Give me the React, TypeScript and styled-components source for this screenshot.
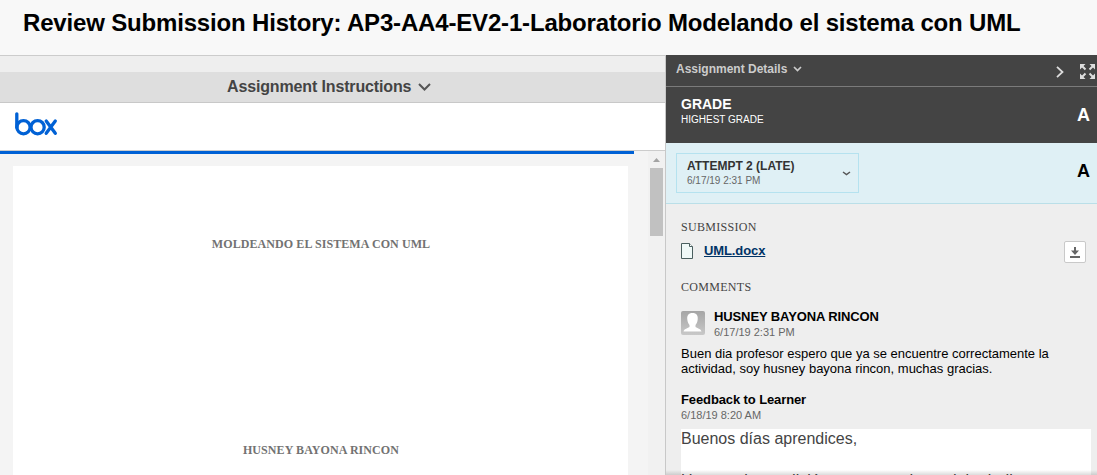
import React from "react";
import styled, { createGlobalStyle } from "styled-components";

const Global = createGlobalStyle`
  *{box-sizing:border-box}
  html,body{margin:0;padding:0;height:475px;overflow:hidden}
  body{background:#eee;font-family:"Liberation Sans",Arial,sans-serif;color:#000}
  svg{display:block;flex:none}
`;
const Page = styled.div`width:1097px;height:475px;display:flex;flex-direction:column;overflow:hidden;`;
const Header = styled.header`height:55px;flex:none;background:#f8f8f8;padding:9px 0 0 23px;`;
const Title = styled.h1`margin:0;font-size:24px;line-height:28px;white-space:nowrap;letter-spacing:-0.17px;`;
const Body = styled.main`flex:1;display:flex;min-height:0;`;
const Viewer = styled.section`width:666px;flex:none;display:flex;flex-direction:column;background:#eee;border-right:1px solid #c8c8c8;border-top:1px solid #ccc;`;
const Instructions = styled.div`margin-top:16px;height:31px;flex:none;background:#dedede;border-bottom:1px solid #c8c8c8;display:flex;align-items:center;padding-left:227px;gap:7px;color:#444;font-size:16px;font-weight:bold;letter-spacing:-0.14px;`;
const BoxBar = styled.div`height:48px;flex:none;background:#fff;border-bottom:1px solid #ccc;padding:9px 0 0 15px;`;
const Preview = styled.div`flex:1;display:flex;min-height:0;background:#f4f4f4;`;
const Scroller = styled.div`flex:1;min-width:0;`;
const Progress = styled.div`height:3px;width:634px;background:#0061d5;`;
const Sheet = styled.article`margin:12px 0 0 13px;width:615px;height:310px;background:#fff;display:flex;flex-direction:column;align-items:center;padding:70px 0 0 1px;gap:190px;`;
const SheetLine = styled.div`font:bold 12px/16px "Liberation Serif",serif;color:#727272;white-space:nowrap;letter-spacing:0.08px;`;
const Scrollbar = styled.div`width:17px;flex:none;background:#f1f1f1;display:flex;flex-direction:column;align-items:center;padding-top:7px;gap:6px;`;
const Thumb = styled.div`width:13px;height:68px;background:#c1c1c1;`;
const Details = styled.aside`flex:1;min-width:0;display:flex;flex-direction:column;background:#eee;`;
const DetailsBar = styled.div`height:32px;flex:none;background:#444;border-bottom:1px solid #7b7b7b;display:flex;padding-left:10px;color:#ccc;font-size:12px;font-weight:bold;line-height:28px;`;
const BarLabel = styled.div`flex:1;display:flex;align-items:center;height:28px;gap:6px;`;
const BarActions = styled.div`display:flex;align-items:center;gap:16px;height:33px;padding-right:2px;`;
const Grade = styled.div`height:56px;flex:none;background:#444;color:#fff;display:flex;justify-content:space-between;padding:9px 7px 0 15px;`;
const GradeName = styled.div`font-size:14px;line-height:16px;font-weight:bold;`;
const GradeType = styled.div`font-size:10px;line-height:16px;`;
const Letter = styled.div`font-size:18px;line-height:38px;font-weight:bold;`;
const Attempt = styled.div`height:61px;flex:none;background:#dff0f5;border-bottom:1px solid #badfe8;display:flex;justify-content:space-between;padding:10px 7px 0 10px;`;
const AttemptLetter = styled(Letter)`line-height:36px;`;
const Picker = styled.button`width:183px;height:40px;background:transparent;border:1px solid #b5e2ef;padding:0 7px 0 10px;display:flex;align-items:center;justify-content:space-between;font-family:inherit;text-align:left;color:#333;`;
const AttemptName = styled.div`font-size:12px;line-height:15px;font-weight:bold;`;
const AttemptDate = styled.div`font-size:10px;line-height:14px;color:#666;`;
const Content = styled.div`flex:1;min-height:0;padding:14px 6px 0 15px;position:relative;overflow:hidden;`;
const Heading = styled.h2`margin:0;font:normal 12px/18px "Liberation Serif",serif;color:#444;letter-spacing:0.3px;`;
const FileRow = styled.div`display:flex;align-items:center;height:30px;margin-bottom:12px;`;
const FileLink = styled.a`flex:1;margin-left:11px;font-size:13px;line-height:16px;font-weight:bold;color:#003366;text-decoration:underline;letter-spacing:-0.1px;`;
const Download = styled.button`width:22px;height:22px;padding:0;margin:2px 5px 0 0;border:1px solid #c9c9c9;border-radius:2px;background:#fff;display:grid;place-items:center;`;
const Author = styled.div`display:flex;gap:9px;margin-top:13px;height:33px;align-items:flex-start;`;
const Avatar = styled.svg`margin-top:2px;`;
const Name = styled.div`font-size:13px;line-height:16px;font-weight:bold;white-space:nowrap;letter-spacing:-0.11px;`;
const Stamp = styled.div`margin-top:-1px;font-size:11px;line-height:16px;color:#666;`;
const Message = styled.p`margin:4px 0 16px;font-size:13px;line-height:15px;width:380px;`;
const Feedback = styled.div`margin-top:6px;height:80px;background:#fff;font-size:16px;line-height:19px;color:#444;white-space:nowrap;overflow:hidden;`;
const FeedbackLine = styled.div`height:42px;`;
const Fade = styled.div`position:absolute;left:0;right:0;bottom:0;height:5px;background:linear-gradient(transparent,rgba(0,0,0,.14));`;

const Chevron = ({ w, h, color, stroke = 2 }: { w: number; h: number; color: string; stroke?: number }) => (
  <svg width={w} height={h} viewBox={`0 0 ${w} ${h}`} fill="none" stroke={color} strokeWidth={stroke}>
    <path d={`M1 1 L${w / 2} ${h - 1.5} L${w - 1} 1`} />
  </svg>
);

export default function App() {
  return (
    <Page>
      <Global />
      <Header><Title>Review Submission History: AP3-AA4-EV2-1-Laboratorio Modelando el sistema con UML</Title></Header>
      <Body>
        <Viewer>
          <Instructions><span>Assignment Instructions</span><Chevron w={13} h={8} color="#555" /></Instructions>
          <BoxBar>
            <svg width="43" height="24" viewBox="0 0 43 24" fill="none" stroke="#0061d5" strokeWidth="3.3" strokeLinecap="round">
              <path d="M1.8 1.8V15.5" />
              <circle cx="8.5" cy="15.2" r="6.6" />
              <circle cx="22.6" cy="15.2" r="6.6" />
              <path d="M31.200 9L40.300 21.300M40.300 9L31.200 21.300" />
            </svg>
          </BoxBar>
          <Preview>
            <Scroller>
              <Progress />
              <Sheet>
                <SheetLine>MOLDEANDO EL SISTEMA CON UML</SheetLine>
                <SheetLine>HUSNEY BAYONA RINCON</SheetLine>
              </Sheet>
            </Scroller>
            <Scrollbar>
              <svg width="7" height="4" viewBox="0 0 7 4"><path d="M0 4L3.5 0L7 4Z" fill="#a3a3a3" /></svg>
              <Thumb />
            </Scrollbar>
          </Preview>
        </Viewer>
        <Details>
          <DetailsBar>
            <BarLabel><span>Assignment Details</span><Chevron w={9} h={6} color="#ccc" stroke={1.7} /></BarLabel>
            <BarActions>
              <svg width="8" height="12" viewBox="0 0 8 12" fill="none" stroke="#ddd" strokeWidth="1.8"><path d="M1 .8L6.500 6L1 11.2" /></svg>
              <svg width="15" height="15" viewBox="0 0 15 15" fill="#ddd" stroke="#ddd" strokeWidth="2">
                <path stroke="none" d="M0 0H5.500L0 5.500ZM9.500 0H15V5.500ZM0 9.500V15H5.500ZM15 9.500V15H9.500Z" />
                <path d="M2 2L5.500 5.500M13 2L9.500 5.500M2 13L5.500 9.500M13 13L9.500 9.500" />
              </svg>
            </BarActions>
          </DetailsBar>
          <Grade>
            <div><GradeName>GRADE</GradeName><GradeType>HIGHEST GRADE</GradeType></div>
            <Letter>A</Letter>
          </Grade>
          <Attempt>
            <Picker>
              <div><AttemptName>ATTEMPT 2 (LATE)</AttemptName><AttemptDate>6/17/19 2:31 PM</AttemptDate></div>
              <Chevron w={9} h={5} color="#555" stroke={1.5} />
            </Picker>
            <AttemptLetter>A</AttemptLetter>
          </Attempt>
          <Content>
            <Heading>SUBMISSION</Heading>
            <FileRow>
              <svg width="12" height="16" viewBox="0 0 12 16" fill="#f0f9f8" stroke="#4a5f5f"><path d="M.5.5H8.5L11.5 3.5V15.5H.5Z" /><path d="M8.5.5V3.5H11.5" fill="#fff" /></svg>
              <FileLink>UML.docx</FileLink>
              <Download>
                <svg width="10" height="11" viewBox="0 0 10 11" fill="#666"><path d="M4 0H6V3.5H9L5 8L1 3.5H4ZM0 9H10V11H0Z" /></svg>
              </Download>
            </FileRow>
            <Heading>COMMENTS</Heading>
            <Author>
              <Avatar width="24" height="24" viewBox="0 0 24 24">
                <defs><linearGradient id="avatar" x2="0" y2="1"><stop stopColor="#a5a5a5" /><stop offset="1" stopColor="#c8c8c8" /></linearGradient></defs>
                <rect width="24" height="24" rx="2" fill="url(#avatar)" />
                <path d="M11.500 2C7.500 2 5.800 4.500 6.300 8.500C6.500 11 7.500 13 8.500 14V16C6 17.500 3 18 2.500 20.500H20.500C20 18 17 17.500 14.500 16V14C15.500 13 16.500 11 16.700 8.500C17.200 4.500 15.500 2 11.500 2Z" fill="#fff" />
              </Avatar>
              <div><Name>HUSNEY BAYONA RINCON</Name><Stamp>6/17/19 2:31 PM</Stamp></div>
            </Author>
            <Message>Buen dia profesor espero que ya se encuentre correctamente la actividad, soy husney bayona rincon, muchas gracias.</Message>
            <Name>Feedback to Learner</Name>
            <Stamp>6/18/19 8:20 AM</Stamp>
            <Feedback><FeedbackLine>Buenos días aprendices,</FeedbackLine><FeedbackLine>Una vez la condición corresponda se debe indicar</FeedbackLine></Feedback>
            <Fade />
          </Content>
        </Details>
      </Body>
    </Page>
  );
}
